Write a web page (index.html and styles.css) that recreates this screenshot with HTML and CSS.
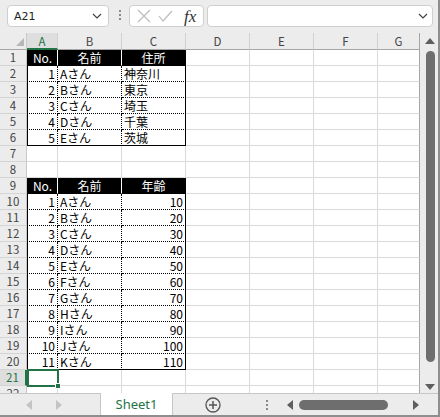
FILE: index.html
```html
<!DOCTYPE html>
<html lang="ja">
<head>
    <meta charset="UTF-8">
    <title>Book1 - Excel</title>
    <link rel="stylesheet" href="styles.css">
</head>
<body>
<div class="window">
    <div class="formula-bar">
        <div class="name-box">
            <span>A21</span>
            <svg class="chevron" width="10" height="6" viewBox="0 0 10 6"><polyline points="1,1 5,5 9,1" fill="none" stroke="#444" stroke-width="1.2"/></svg>
        </div>
        <div class="grip"><i></i><i></i><i></i></div>
        <div class="fx-buttons">
            <svg width="14" height="14" viewBox="0 0 14 14"><path d="M1 1 L13 13 M13 1 L1 13" stroke="#bdbdbd" stroke-width="1.2" fill="none"/></svg>
            <svg width="15" height="12" viewBox="0 0 15 12"><polyline points="1,6 5,11 14,1" stroke="#bdbdbd" stroke-width="1.2" fill="none"/></svg>
            <span class="fx">fx</span>
        </div>
        <div class="formula-input">
            <svg class="chevron" width="10" height="6" viewBox="0 0 10 6"><polyline points="1,1 5,5 9,1" fill="none" stroke="#444" stroke-width="1.2"/></svg>
        </div>
    </div>

    <div class="main">
        <div class="sheet">
            <div class="row head">
                <div class="rh corner"><b></b></div>
                <div class="ch a on">A</div><div class="ch w">B</div><div class="ch w">C</div><div class="ch w">D</div><div class="ch w">E</div><div class="ch w">F</div><div class="ch g">G</div>
            </div>

            <div class="row"><div class="rh">1</div><div class="c a h l">No.</div><div class="c w h">名前</div><div class="c w h r">住所</div><div class="c w"></div><div class="c w"></div><div class="c w"></div><div class="c g"></div></div>
            <div class="row"><div class="rh">2</div><div class="c a t l n">1</div><div class="c w t">Aさん</div><div class="c w t r">神奈川</div><div class="c w"></div><div class="c w"></div><div class="c w"></div><div class="c g"></div></div>
            <div class="row"><div class="rh">3</div><div class="c a t l n">2</div><div class="c w t">Bさん</div><div class="c w t r">東京</div><div class="c w"></div><div class="c w"></div><div class="c w"></div><div class="c g"></div></div>
            <div class="row"><div class="rh">4</div><div class="c a t l n">3</div><div class="c w t">Cさん</div><div class="c w t r">埼玉</div><div class="c w"></div><div class="c w"></div><div class="c w"></div><div class="c g"></div></div>
            <div class="row"><div class="rh">5</div><div class="c a t l n">4</div><div class="c w t">Dさん</div><div class="c w t r">千葉</div><div class="c w"></div><div class="c w"></div><div class="c w"></div><div class="c g"></div></div>
            <div class="row"><div class="rh">6</div><div class="c a t l n b">5</div><div class="c w t b">Eさん</div><div class="c w t r b">茨城</div><div class="c w"></div><div class="c w"></div><div class="c w"></div><div class="c g"></div></div>
            <div class="row"><div class="rh">7</div><div class="c a"></div><div class="c w"></div><div class="c w"></div><div class="c w"></div><div class="c w"></div><div class="c w"></div><div class="c g"></div></div>
            <div class="row"><div class="rh">8</div><div class="c a"></div><div class="c w"></div><div class="c w"></div><div class="c w"></div><div class="c w"></div><div class="c w"></div><div class="c g"></div></div>

            <div class="row"><div class="rh">9</div><div class="c a h l">No.</div><div class="c w h">名前</div><div class="c w h r">年齢</div><div class="c w"></div><div class="c w"></div><div class="c w"></div><div class="c g"></div></div>
            <div class="row"><div class="rh">10</div><div class="c a t l n">1</div><div class="c w t">Aさん</div><div class="c w t r n">10</div><div class="c w"></div><div class="c w"></div><div class="c w"></div><div class="c g"></div></div>
            <div class="row"><div class="rh">11</div><div class="c a t l n">2</div><div class="c w t">Bさん</div><div class="c w t r n">20</div><div class="c w"></div><div class="c w"></div><div class="c w"></div><div class="c g"></div></div>
            <div class="row"><div class="rh">12</div><div class="c a t l n">3</div><div class="c w t">Cさん</div><div class="c w t r n">30</div><div class="c w"></div><div class="c w"></div><div class="c w"></div><div class="c g"></div></div>
            <div class="row"><div class="rh">13</div><div class="c a t l n">4</div><div class="c w t">Dさん</div><div class="c w t r n">40</div><div class="c w"></div><div class="c w"></div><div class="c w"></div><div class="c g"></div></div>
            <div class="row"><div class="rh">14</div><div class="c a t l n">5</div><div class="c w t">Eさん</div><div class="c w t r n">50</div><div class="c w"></div><div class="c w"></div><div class="c w"></div><div class="c g"></div></div>
            <div class="row"><div class="rh">15</div><div class="c a t l n">6</div><div class="c w t">Fさん</div><div class="c w t r n">60</div><div class="c w"></div><div class="c w"></div><div class="c w"></div><div class="c g"></div></div>
            <div class="row"><div class="rh">16</div><div class="c a t l n">7</div><div class="c w t">Gさん</div><div class="c w t r n">70</div><div class="c w"></div><div class="c w"></div><div class="c w"></div><div class="c g"></div></div>
            <div class="row"><div class="rh">17</div><div class="c a t l n">8</div><div class="c w t">Hさん</div><div class="c w t r n">80</div><div class="c w"></div><div class="c w"></div><div class="c w"></div><div class="c g"></div></div>
            <div class="row"><div class="rh">18</div><div class="c a t l n">9</div><div class="c w t">Iさん</div><div class="c w t r n">90</div><div class="c w"></div><div class="c w"></div><div class="c w"></div><div class="c g"></div></div>
            <div class="row"><div class="rh">19</div><div class="c a t l n">10</div><div class="c w t">Jさん</div><div class="c w t r n">100</div><div class="c w"></div><div class="c w"></div><div class="c w"></div><div class="c g"></div></div>
            <div class="row"><div class="rh">20</div><div class="c a t l n b">11</div><div class="c w t b">Kさん</div><div class="c w t r n b">110</div><div class="c w"></div><div class="c w"></div><div class="c w"></div><div class="c g"></div></div>
            <div class="row"><div class="rh on">21</div><div class="c a sel"></div><div class="c w"></div><div class="c w"></div><div class="c w"></div><div class="c w"></div><div class="c w"></div><div class="c g"></div></div>
            <div class="row"><div class="rh">22</div><div class="c a"></div><div class="c w"></div><div class="c w"></div><div class="c w"></div><div class="c w"></div><div class="c w"></div><div class="c g"></div></div>
        </div>

        <div class="vscroll">
            <span class="arrow-up"></span>
            <span class="vthumb"></span>
            <span class="arrow-down"></span>
        </div>
    </div>

    <div class="tabbar">
        <div class="sheet-nav">
            <span class="arrow-left light"></span>
            <span class="arrow-right light"></span>
        </div>
        <div class="tab">Sheet1</div>
        <svg class="add-sheet" width="16" height="16" viewBox="0 0 16 16">
            <circle cx="8" cy="8" r="7" fill="none" stroke="#555" stroke-width="1.3"/>
            <path d="M8 4 V12 M4 8 H12" stroke="#555" stroke-width="1.5"/>
        </svg>
        <div class="grip small"><i></i><i></i><i></i></div>
        <div class="hscroll">
            <span class="arrow-left"></span>
            <span class="hthumb"></span>
            <span class="arrow-right"></span>
        </div>
    </div>
</div>
</body>
</html>
```

FILE: styles.css
```css
body {
    margin: 0;
    font-family: "Noto Sans CJK JP", "Noto Sans", sans-serif;
    font-size: 12px;
}

.window {
    width: 440px;
    height: 417px;
    box-sizing: border-box;
    background: #ececec;
    border-right: 2px solid #8e8e8e;
    border-bottom: 2px solid #8e8e8e;
    overflow: hidden;
}

/* formula bar */
.formula-bar {
    height: 33px;
    box-sizing: border-box;
    display: flex;
    align-items: flex-start;
    padding: 5px 0 0 7px;
}

.name-box,
.fx-buttons,
.formula-input {
    height: 22px;
    box-sizing: border-box;
    background: #fff;
    border: 1px solid #cfcfcf;
    border-radius: 4px;
    display: flex;
    align-items: center;
}

.name-box {
    width: 102px;
    padding: 0 6px 0 6px;
    justify-content: space-between;
    color: #222;
    font-family: "DejaVu Sans", sans-serif;
    font-size: 11px;
}

.grip {
    display: flex;
    flex-direction: column;
    gap: 2px;
    margin: 5px 8px 0 10px;
}

.grip i {
    width: 2px;
    height: 2px;
    background: #8a8a8a;
}

.fx-buttons {
    width: 75px;
    padding: 0 4px 0 7px;
    gap: 7px;
}

.fx {
    font-family: "Liberation Serif", serif;
    font-style: italic;
    font-size: 17px;
    color: #333;
    margin-left: 4px;
    line-height: 1;
}

.formula-input {
    width: 226px;
    margin-left: 3px;
    justify-content: flex-end;
    padding-right: 4px;
}

/* grid */
.main {
    display: flex;
    height: 360px;
}

.sheet {
    width: 420px;
    overflow: hidden;
}

.row {
    display: flex;
    height: 16px;
}

.row.head {
    height: 17px;
}

.rh {
    width: 27px;
    flex: none;
    box-sizing: border-box;
    border-right: 1px solid #c8c8c8;
    border-bottom: 1px solid #d4d4d4;
    color: #444;
    text-align: center;
    line-height: 15px;
    font-size: 11.5px;
}

.rh.on {
    color: #217346;
    background: #dedede;
    border-right: 2px solid #217346;
}

.head .rh,
.ch {
    border-bottom: 1px solid #a6a6a6;
}

.corner {
    display: flex;
    justify-content: flex-end;
    align-items: flex-end;
    padding: 0 2px 3px 0;
}

.corner b {
    width: 0;
    height: 0;
    border-left: 8px solid transparent;
    border-bottom: 8px solid #b7b7b7;
}

.ch {
    box-sizing: border-box;
    border-right: 1px solid #d0d0d0;
    color: #444;
    text-align: center;
    line-height: 17px;
    font-size: 11.5px;
}

.ch.on {
    color: #217346;
    background: #dedede;
    border-bottom: 2px solid #217346;
}

.ch.g {
    border-right-color: #a6a6a6;
}

.c {
    box-sizing: border-box;
    background: #fff;
    border-right: 1px solid #dadada;
    border-bottom: 1px solid #dadada;
    padding: 0 2px;
    line-height: 15px;
    white-space: nowrap;
    overflow: hidden;
    color: #000;
}

.a { width: 31px; flex: none; }
.w { width: 64px; flex: none; }
.g { flex: 1; border-right-color: #a6a6a6; }

/* table cells */
.h {
    background: #000;
    color: #fff;
    text-align: center;
    border-right: 1px solid #fff;
    border-bottom: 1px solid #000;
}

.t {
    border-right: 1px dotted #000;
    border-bottom: 1px dotted #000;
}

.l { border-left: 1px solid #000; }
.r { border-right: 1px solid #000; }
.b { border-bottom: 1px solid #000; }
.n { text-align: right; }

.sel {
    position: relative;
    overflow: visible;
}

.sel::after {
    content: "";
    position: absolute;
    left: 0;
    top: -1px;
    width: 32px;
    height: 18px;
    box-sizing: border-box;
    border: 2px solid #217346;
    z-index: 1;
}

.sel::before {
    content: "";
    position: absolute;
    left: 28px;
    top: 13px;
    width: 6px;
    height: 6px;
    box-sizing: border-box;
    background: #217346;
    border: 1px solid #fff;
    z-index: 2;
}

/* vertical scrollbar */
.vscroll {
    width: 18px;
    display: flex;
    flex-direction: column;
    align-items: center;
    padding-top: 5px;
    box-sizing: border-box;
}

.arrow-up,
.arrow-down {
    width: 0;
    height: 0;
    border-left: 5px solid transparent;
    border-right: 5px solid transparent;
    margin-left: 2px;
}

.arrow-up { border-bottom: 6px solid #5e5e5e; }
.arrow-down { border-top: 6px solid #5e5e5e; margin-top: 22px; }

.vthumb {
    width: 9px;
    height: 311px;
    margin: 7px 0 0 2px;
    background: #6e6e6e;
    border-radius: 5px;
}

/* sheet tabs */
.tabbar {
    height: 22px;
    box-sizing: border-box;
    border-top: 1px solid #c6c6c6;
    display: flex;
    align-items: center;
}

.sheet-nav {
    width: 100px;
    flex: none;
    display: flex;
    align-items: center;
    gap: 24px;
    padding-left: 26px;
    box-sizing: border-box;
}

.arrow-left,
.arrow-right {
    width: 0;
    height: 0;
    border-top: 5px solid transparent;
    border-bottom: 5px solid transparent;
}

.arrow-left { border-right: 6px solid #5e5e5e; }
.arrow-right { border-left: 6px solid #5e5e5e; }
.arrow-left.light { border-right-color: #c4c4c4; }
.arrow-right.light { border-left-color: #c4c4c4; }

.tab {
    align-self: stretch;
    width: 73px;
    margin-top: -1px;
    box-sizing: border-box;
    background: #fff;
    border-left: 1px solid #c6c6c6;
    border-right: 1px solid #c6c6c6;
    color: #217346;
    font-family: "Noto Sans", sans-serif;
    font-size: 13px;
    text-align: center;
    line-height: 22px;
}

.add-sheet {
    margin-left: 32px;
}

.grip.small {
    margin: 0 0 0 45px;
}

.hscroll {
    display: flex;
    align-items: center;
    margin-left: 19px;
}

.hthumb {
    width: 89px;
    height: 10px;
    margin: 0 25px 0 6px;
    background: #6e6e6e;
    border-radius: 5px;
}
```
